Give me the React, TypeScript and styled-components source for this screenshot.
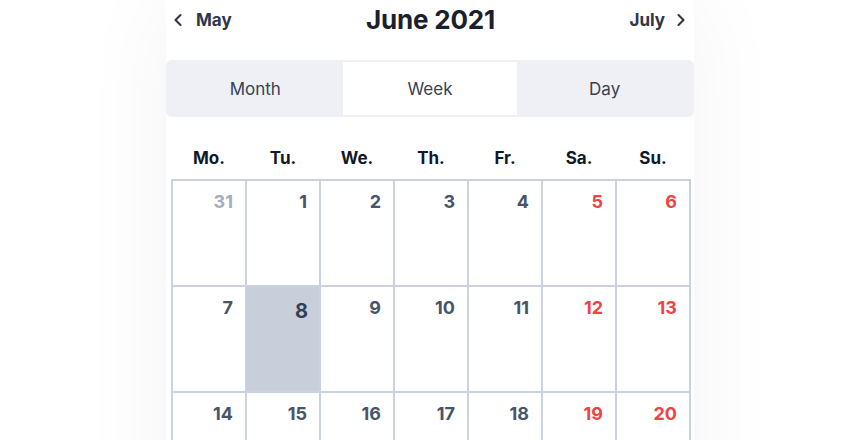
import React, { useState } from "react";
import styled, { createGlobalStyle } from "styled-components";
import { ChevronLeft, ChevronRight } from "lucide-react";

const GlobalStyle = createGlobalStyle`
  html, body {
    margin: 0;
    padding: 0;
    background: #ffffff;
    overflow: hidden;
  }
  body {
    font-family: Inter, "Noto Sans", sans-serif;
    -webkit-font-smoothing: antialiased;
  }
`;

const Page = styled.div`
  width: 100%;
  height: 440px;
  display: flex;
  justify-content: center;
  align-items: flex-start;
`;

const Card = styled.div`
  width: 528px;
  min-height: 440px;
  background: #ffffff;
  box-shadow: 0 0 90px rgba(15, 23, 42, 0.05);
`;

const Header = styled.div`
  height: 39px;
  display: flex;
  align-items: center;
  justify-content: space-between;
  padding: 0 3px 0 2px;
`;

const NavButton = styled.button<{ $gap: number }>`
  display: flex;
  align-items: center;
  gap: ${(p) => p.$gap}px;
  border: none;
  background: none;
  padding: 0;
  font-family: inherit;
  font-size: 17px;
  font-weight: 700;
  color: #2d3748;
  cursor: pointer;
`;

const Title = styled.h1`
  margin: 0;
  font-size: 26px;
  font-weight: 700;
  color: #1a202c;
  letter-spacing: -0.2px;
`;

const Tabs = styled.div`
  margin-top: 21px;
  height: 57px;
  padding: 2px;
  box-sizing: border-box;
  background: #eef0f5;
  border-radius: 6px;
  display: grid;
  grid-template-columns: repeat(3, 1fr);
`;

const Tab = styled.button<{ $active?: boolean }>`
  border: none;
  font-family: inherit;
  font-size: 17px;
  font-weight: 400;
  color: #374151;
  background: ${(p) => (p.$active ? "#ffffff" : "transparent")};
  cursor: pointer;
`;

const Weekdays = styled.div`
  display: grid;
  grid-template-columns: repeat(7, 74px);
  margin-left: 5px;
  padding: 30px 0 10px 1px;
`;

const Weekday = styled.div`
  text-align: center;
  font-size: 17px;
  line-height: 22px;
  font-weight: 700;
  color: #111827;
`;

const Grid = styled.div`
  display: grid;
  grid-template-columns: repeat(7, 72px);
  grid-auto-rows: 104px;
  gap: 2px;
  padding: 2px;
  width: max-content;
  margin-left: 5px;
  background: #cbd2dd;
`;

const Cell = styled.div<{ $selected?: boolean }>`
  background: ${(p) => (p.$selected ? "#c8cfda" : "#ffffff")};
  display: flex;
  justify-content: flex-end;
  align-items: flex-start;
  padding: ${(p) => (p.$selected ? "12px 11px 0 0" : "10px 12px 0 0")};
`;

const DayNum = styled.span<{ $tone: "muted" | "normal" | "weekend"; $big?: boolean }>`
  font-size: ${(p) => (p.$big ? "20px" : "18px")};
  line-height: ${(p) => (p.$big ? "24px" : "22px")};
  font-weight: 700;
  color: ${(p) =>
    p.$tone === "muted" ? "#a3adbd" : p.$tone === "weekend" ? "#ef4444" : p.$big ? "#334155" : "#475569"};
`;

const weekdays = ["Mo.", "Tu.", "We.", "Th.", "Fr.", "Sa.", "Su."];

const buildDays = () => {
  const days: { n: number; inMonth: boolean }[] = [{ n: 31, inMonth: false }];
  for (let i = 1; i <= 30; i++) days.push({ n: i, inMonth: true });
  for (let i = 1; i <= 4; i++) days.push({ n: i, inMonth: false });
  return days;
};

export default function App() {
  const [view, setView] = useState("Week");
  const days = buildDays();

  return (
    <>
      <GlobalStyle />
      <Page>
        <Card>
          <Header>
            <NavButton $gap={8}>
              <ChevronLeft size={20} strokeWidth={2.5} />
              May
            </NavButton>
            <Title>June 2021</Title>
            <NavButton $gap={6}>
              July
              <ChevronRight size={20} strokeWidth={2.5} />
            </NavButton>
          </Header>

          <Tabs>
            {["Month", "Week", "Day"].map((t) => (
              <Tab key={t} $active={view === t} onClick={() => setView(t)}>
                {t}
              </Tab>
            ))}
          </Tabs>

          <Weekdays>
            {weekdays.map((d) => (
              <Weekday key={d}>{d}</Weekday>
            ))}
          </Weekdays>

          <Grid>
            {days.map((d, i) => {
              const weekend = i % 7 >= 5;
              const selected = d.inMonth && d.n === 8;
              const tone = !d.inMonth ? "muted" : weekend ? "weekend" : "normal";
              return (
                <Cell key={i} $selected={selected}>
                  <DayNum $tone={tone} $big={selected}>
                    {d.n}
                  </DayNum>
                </Cell>
              );
            })}
          </Grid>
        </Card>
      </Page>
    </>
  );
}
